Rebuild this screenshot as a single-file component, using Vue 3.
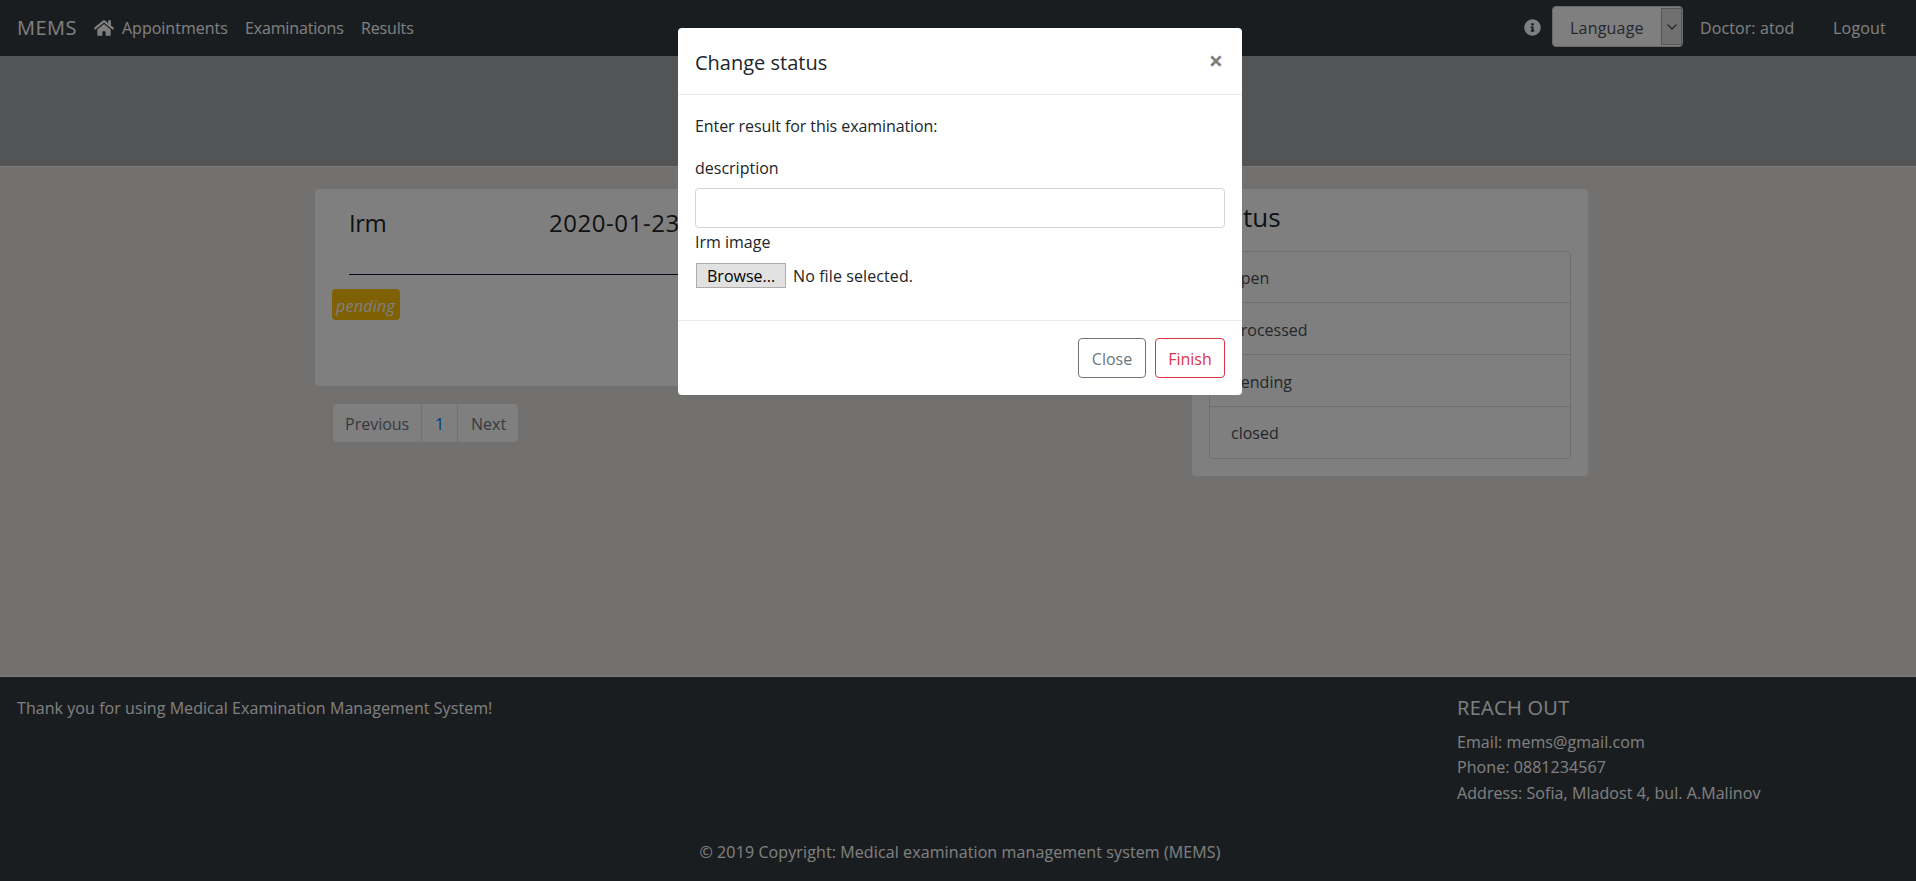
<script setup>
const links = [
  { text: 'Appointments', cls: 'appointments' },
  { text: 'Examinations', cls: 'examinations' },
  { text: 'Results', cls: 'results' },
]
const statuses = ['open', 'processed', 'pending', 'closed']
const contacts = ['Email: mems@gmail.com', 'Phone: 0881234567', 'Address: Sofia, Mladost 4, bul. A.Malinov']
</script>

<template>
  <div class="page">
    <nav class="navbar">
      <a class="brand">MEMS</a>
      <svg class="home" viewBox="0 0 576 512" fill="currentColor">
        <path d="M280.400 148.300L96 300.100V464a16 16 0 0 0 16 16l112-.3a16 16 0 0 0 16-16V368a16 16 0 0 1 16-16h64a16 16 0 0 1 16 16v95.600a16 16 0 0 0 16 16.100L464 480a16 16 0 0 0 16-16V300L295.700 148.300a12.200 12.200 0 0 0-15.300 0zM571.600 251.500L488 182.600V44a12 12 0 0 0-12-12h-56a12 12 0 0 0-12 12v72.600L318.500 43a48 48 0 0 0-61 0L4.300 251.500a12 12 0 0 0-1.600 16.900l25.500 31a12 12 0 0 0 16.900 1.600L280.400 107.200a12.200 12.200 0 0 1 15.300 0L530.900 301a12 12 0 0 0 16.900-1.600l25.500-31a12 12 0 0 0-1.700-16.900z" />
      </svg>
      <a v-for="l in links" :key="l.text" class="link" :class="l.cls">{{ l.text }}</a>
      <div class="right">
        <svg class="info" viewBox="0 0 512 512" fill="currentColor">
          <path d="M256 8C119 8 8 119.100 8 256s111 248 248 248 248-111 248-248S393 8 256 8zm0 110a42 42 0 1 1 0 84 42 42 0 0 1 0-84zm56 254a12 12 0 0 1-12 12h-88a12 12 0 0 1-12-12v-24a12 12 0 0 1 12-12h12v-64h-12a12 12 0 0 1-12-12v-24a12 12 0 0 1 12-12h64a12 12 0 0 1 12 12v100h12a12 12 0 0 1 12 12z" />
        </svg>
        <div class="select">
          <span class="select-text">Language</span>
          <span class="select-btn">
            <svg viewBox="0 0 10 6" fill="none" stroke="#333" stroke-width="1.100"><path d="M.6.6 5 5 9.400.6" /></svg>
          </span>
        </div>
        <a class="doctor">Doctor: atod</a>
        <a class="logout">Logout</a>
      </div>
    </nav>

    <div class="band"></div>

    <main class="content">
      <div class="left">
        <section class="exam">
          <div class="exam-head">
            <h4 class="exam-name">Irm</h4>
            <h4 class="exam-date">2020-01-23</h4>
          </div>
          <span class="badge"><i>pending</i></span>
        </section>
        <ul class="pages">
          <li class="prev">Previous</li>
          <li class="current">1</li>
          <li class="next">Next</li>
        </ul>
      </div>
      <section class="status">
        <h3>Status</h3>
        <ul>
          <li v-for="s in statuses" :key="s">{{ s }}</li>
        </ul>
      </section>
    </main>

    <footer class="footer">
      <div class="footer-row">
        <p class="thanks">Thank you for using Medical Examination Management System!</p>
        <div class="reach">
          <h5>REACH OUT</h5>
          <p v-for="c in contacts" :key="c">{{ c }}</p>
        </div>
      </div>
      <p class="copy">© 2019 Copyright: Medical examination management system (MEMS)</p>
    </footer>

    <div class="backdrop">
      <div class="modal">
        <header>
          <h5>Change status</h5>
          <span class="close">×</span>
        </header>
        <div class="body">
          <p class="prompt">Enter result for this examination:</p>
          <label class="desc">description</label>
          <input type="text" class="field" />
          <label class="image">Irm image</label>
          <div class="file">
            <span class="browse">Browse...</span>
            <span class="nofile">No file selected.</span>
          </div>
        </div>
        <div class="actions">
          <button class="btn-close">Close</button>
          <button class="btn-finish">Finish</button>
        </div>
      </div>
    </div>
  </div>
</template>

<style>
body { margin: 0; overflow: hidden; }
</style>

<style scoped>
* { box-sizing: border-box; }
.page {
  position: relative; display: flex; flex-direction: column; width: 100%; height: 881px;
  background: #e4e2de; color: #212529;
  font-family: "Open Sans", "Noto Sans", sans-serif; font-size: 16px; line-height: 24px; white-space: nowrap;
}
h3, h4, h5, p, ul { margin: 0; padding: 0; font-weight: 400; list-style: none; }

.navbar { display: flex; align-items: center; height: 56px; padding: 0 30px 0 17px; background: #343a40; color: #fff; }
.brand { width: 60px; font-size: 20px; line-height: 30px; letter-spacing: .5px; }
.home { width: 20px; height: 18px; margin: 0 8px 0 17px; }
.link { margin-right: 17px; }
.appointments { width: 106px; }
.examinations { width: 99px; letter-spacing: -.15px; }
.results { letter-spacing: -.15px; }
.right { display: flex; align-items: center; margin-left: auto; }
.info { width: 17px; height: 17px; margin: 0 11px 2px 0; }
.select { display: flex; align-items: stretch; width: 131px; height: 41px; margin-bottom: 3px; padding: 1px 0 1px 17px; background: #fff; border: 1px solid #ced4da; border-radius: 4px; color: #495057; }
.select-text { flex: 1; padding-top: 8px; letter-spacing: .2px; }
.select-btn { display: flex; align-items: center; justify-content: center; width: 21px; background: #e1e1e1; border: 1px solid #adadad; }
.select-btn svg { width: 10px; height: 6px; }
.doctor { width: 94px; margin-left: 17px; letter-spacing: .1px; }
.logout { width: 53px; margin-left: 39px; letter-spacing: .2px; }

.band { height: 111px; background: #a7a9ac; border-bottom: 1px solid #f8f9fa; }

.content { display: flex; justify-content: space-between; align-items: flex-start; width: 1273px; height: 509px; margin-left: 315px; padding-top: 22px; }
.left { width: 860px; }
.exam { height: 197px; padding: 18px 17px 0; background: #fff; border-radius: 4px; }
.exam-head { display: flex; height: 68px; margin: 0 17px; border-bottom: 1px solid #001432; font-size: 24px; line-height: 32px; }
.exam-name { width: 200px; letter-spacing: -.5px; }
.exam-date { letter-spacing: .55px; }
.badge { display: block; width: 68px; height: 31px; margin-top: 14px; padding: 5px 0 0 4px; background: #ffc107; border-radius: 4px; color: #fff; letter-spacing: .25px; }
.pages { display: flex; width: 185px; height: 38px; margin: 18px 0 0 18px; background: #fff; border-radius: 4px; color: #6c757d; line-height: 40px; }
.prev { width: 89px; padding-left: 12px; border-right: 1px solid #dee2e6; }
.current { width: 36px; border-right: 1px solid #dee2e6; text-align: center; color: #007bff; }
.next { padding-left: 13px; }
.status { width: 396px; height: 287px; padding: 11px 17px 0; background: #fff; border-radius: 4px; }
.status h3 { height: 51px; margin-left: -4px; font-size: 26px; line-height: 34px; }
.status ul { height: 208px; border: 1px solid #dfdfdf; border-radius: 4px; color: #495057; }
.status li { height: 52px; padding: 15px 0 0 21px; border-bottom: 1px solid #dfdfdf; }
.status li:first-child { height: 51px; padding-top: 14px; }
.status li:last-child { padding-top: 14px; border-bottom: 0; }

.footer { height: 205px; padding: 19px 17px 0; background: #343a40; border-top: 1px solid #f8f9fa; color: #fff; }
.footer-row { display: flex; justify-content: space-between; height: 144px; }
.thanks { letter-spacing: .065px; }
.reach { width: 442px; letter-spacing: .07px; }
.reach h5 { height: 33.500px; font-size: 20px; letter-spacing: .3px; }
.reach p { line-height: 25.500px; }
.copy { padding-left: 4px; text-align: center; letter-spacing: .11px; }

.backdrop { position: absolute; inset: 0; padding: 28px 0 0 4px; background: rgba(0, 0, 0, .5); }
.modal { width: 564px; height: 367px; margin: 0 auto; background: #fff; border-radius: 4px; }
.modal header { display: flex; justify-content: space-between; height: 67px; padding: 20px 19px 0 17px; border-bottom: 1px solid #e9ecef; }
.modal h5 { font-size: 20px; line-height: 30px; }
.close { color: #7f7f7f; font-size: 25px; font-weight: 700; line-height: 25px; }
.body { display: flex; flex-direction: column; height: 225px; padding: 19px 17px 0; }
.prompt { height: 42px; letter-spacing: -.08px; }
.desc { height: 32px; }
.field { width: 530px; height: 40px; border: 1px solid #ced4da; border-radius: 4px; background: #fff; }
.image { height: 35px; padding-top: 2px; }
.file { display: flex; height: 25px; padding-left: 1px; line-height: 26px; }
.browse { width: 90px; margin-right: 7px; padding-left: 10px; background: #e1e1e1; border: 1px solid #adadad; color: #000; line-height: 24px; }
.nofile { letter-spacing: .1px; }
.actions { display: flex; justify-content: flex-end; gap: 9px; padding: 17px 17px 0; border-top: 1px solid #e9ecef; }
.actions button { height: 40px; padding: 1px 0 0; border: 1px solid; border-radius: 4px; background: #fff; font: inherit; }
.actions .btn-close { width: 68px; color: #6c757d; }
.actions .btn-finish { width: 70px; color: #dc3545; }
</style>
